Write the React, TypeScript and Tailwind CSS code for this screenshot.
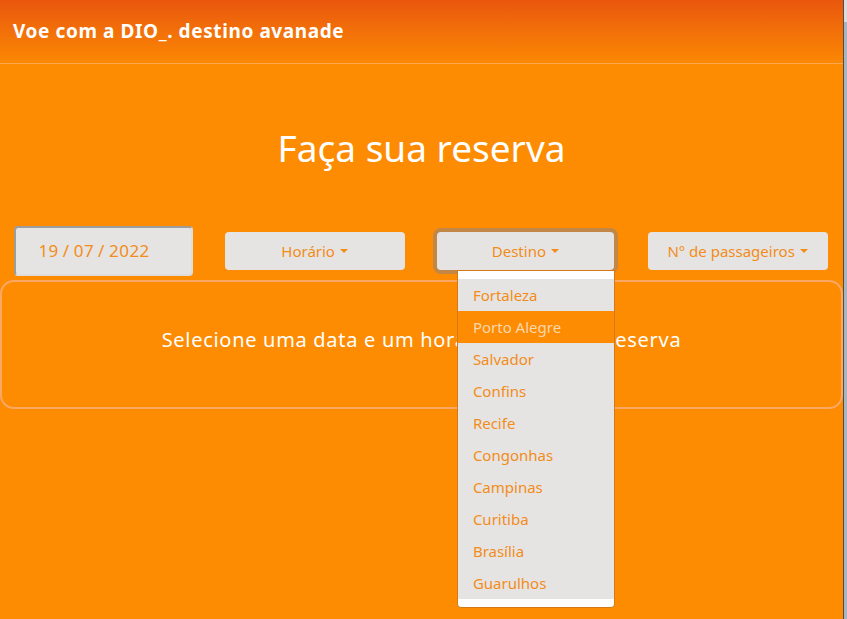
const destinos = [
  "Fortaleza",
  "Porto Alegre",
  "Salvador",
  "Confins",
  "Recife",
  "Congonhas",
  "Campinas",
  "Curitiba",
  "Brasília",
  "Guarulhos",
]

function Caret() {
  return <span className="ml-[5px] inline-block h-0 w-0 border-x-[4px] border-t-[4px] border-x-transparent border-t-[#f28c1a] align-middle" />
}

export default function App() {
  return (
    <div className="flex h-[619px] w-[847px] overflow-hidden bg-[#fd8c02] font-['Noto_Sans','Open_Sans',sans-serif]">
      <div className="relative w-[843px] shrink-0">
        <header className="flex h-[63px] items-center bg-gradient-to-b from-[#e9560d] to-[#fb8803] pl-[13px]">
          <span className="text-[19px] font-bold tracking-[0.6px] text-white">Voe com a DIO_. destino avanade</span>
        </header>
        <div className="h-px bg-[#fca84f]" />

        <h1 className="mt-[60px] text-center text-[37px] font-normal leading-[48px] text-white">Faça sua reserva</h1>

        <div className="mt-[54px] grid h-[50px] grid-cols-4 items-center justify-items-center">
          <div className="mr-[3px] flex h-[50px] w-[179px] items-center rounded-[4px] border-2 border-[#9d9d9d] border-b-[#ddd] border-r-[#ddd] bg-[#e6e4e2] pl-[22px] text-[17px] tracking-[0.5px] text-[#f28c1a]">
            <span>19</span>
            <span className="mx-[4px]">/</span>
            <span>07</span>
            <span className="mx-[4px]">/</span>
            <span>2022</span>
          </div>
          <button className="mr-[3px] flex h-[38px] w-[180px] items-center justify-center rounded-[4px] bg-[#e6e4e2] text-[15px] text-[#f28c1a]">
            Horário
            <Caret />
          </button>
          <div className="relative mr-[3px]">
            <button className="flex h-[38px] w-[177px] items-center justify-center rounded-[4px] bg-[#e6e4e2] text-[15px] text-[#f28c1a] ring-4 ring-[#c28647]">
              Destino
              <Caret />
            </button>
            <div className="absolute left-[20px] top-[38px] z-10 w-[158px] rounded-b-[4px] border border-[#d27a16] bg-white py-[8px]">
              <ul className="bg-[#e6e4e2]">
                {destinos.map((d) => (
                  <li
                    key={d}
                    className={
                      d === "Porto Alegre"
                        ? "flex h-[32px] items-center bg-[#fd8c02] pl-[15px] text-[15px] text-[#f9d7ae]"
                        : "flex h-[32px] items-center pl-[15px] text-[15px] text-[#f28c1a]"
                    }
                  >
                    {d}
                  </li>
                ))}
              </ul>
            </div>
          </div>
          <button className="flex h-[38px] w-[180px] items-center justify-center rounded-[4px] bg-[#e6e4e2] text-[15px] text-[#f28c1a]">
            N° de passageiros
            <Caret />
          </button>
        </div>

        <div className="mt-[4px] flex h-[129px] items-center justify-center rounded-[14px] border-2 border-[#fba865] pb-[10px]">
          <p className="text-[20px] tracking-[0.7px] text-white">Selecione uma data e um horário e faça sua reserva</p>
        </div>
      </div>
      <div className="flex w-[4px] flex-col border-l border-[#5b4b3b] bg-[#a9b4c3]">
        <div className="h-[22px] bg-[#d9dde2]" />
      </div>
    </div>
  )
}
